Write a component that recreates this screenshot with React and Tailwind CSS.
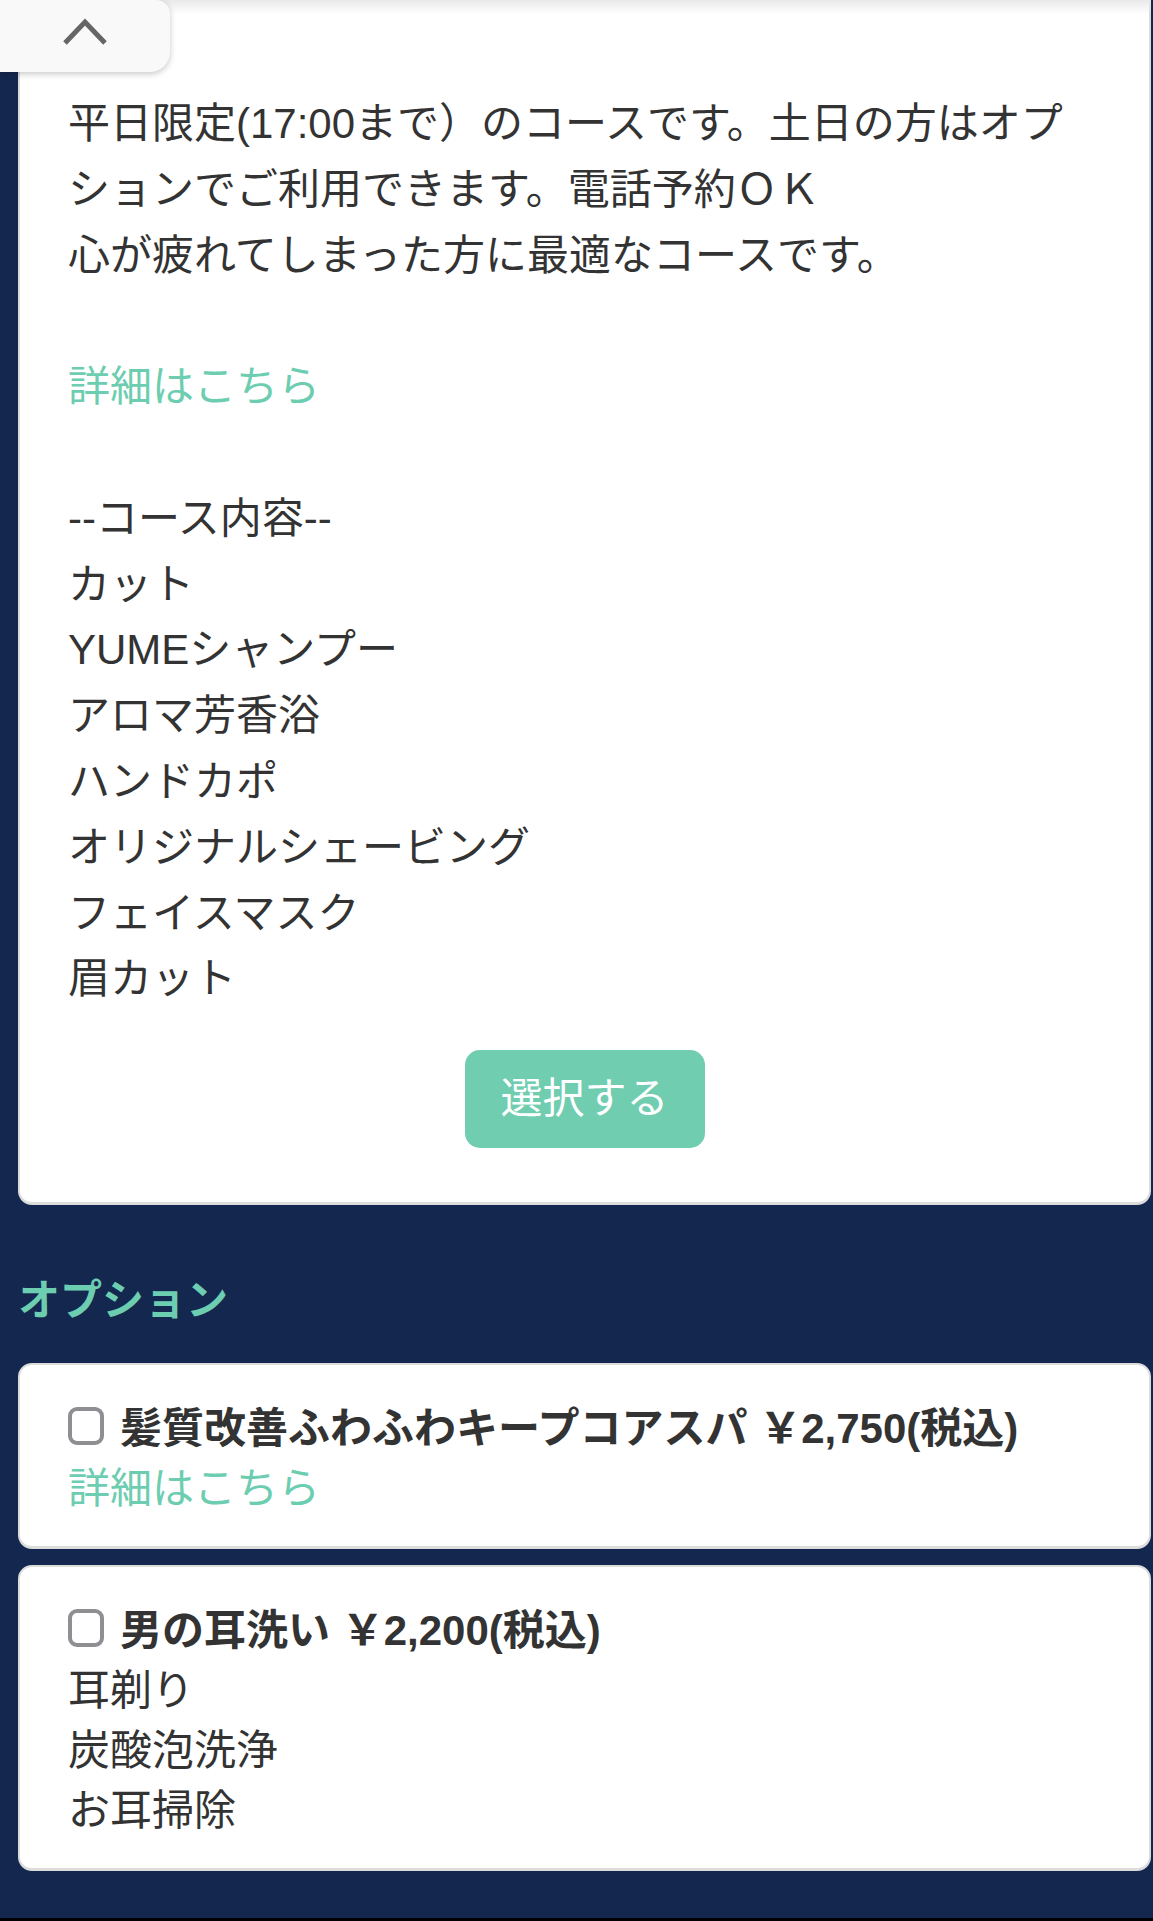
export default function App() {
  const intro = [
    "平日限定(17:00まで）のコースです。土日の方はオプ",
    "ションでご利用できます。電話予約ＯＫ",
    "心が疲れてしまった方に最適なコースです。",
  ];
  const items = [
    "--コース内容--",
    "カット",
    "YUMEシャンプー",
    "アロマ芳香浴",
    "ハンドカポ",
    "オリジナルシェービング",
    "フェイスマスク",
    "眉カット",
  ];
  return (
    <div className="relative w-[1153px] h-[1921px] overflow-hidden bg-[#13274f] flex flex-col font-['Liberation_Sans','Noto_Sans_CJK_JP',sans-serif]">
      <div className="flex flex-col pl-[18px] pr-[2px]">
        {/* main course card */}
        <section className="bg-white border-x-2 border-b-[3px] border-[#dcdcdc] rounded-b-[14px] pt-[91px] pb-[54px] pl-[48px] pr-[30px] text-[42px] leading-[65.8px] text-[#333]">
          {intro.map((t) => (
            <div key={t} className="whitespace-nowrap">{t}</div>
          ))}
          <div className="h-[65.8px]" />
          <div className="text-[#6dcdb0]">詳細はこちら</div>
          <div className="h-[65.8px]" />
          {items.map((t) => (
            <div key={t} className="whitespace-nowrap">{t}</div>
          ))}
          <div className="flex justify-center mt-[38px] -ml-[18px]">
            <button className="w-[240px] h-[98px] rounded-[15px] bg-[#70cdb0] text-white text-[42px] leading-none">
              選択する
            </button>
          </div>
        </section>

        <h2 className="mt-[66px] text-[42px] leading-[60px] font-bold text-[#6dcdb0]">オプション</h2>

        <div className="mt-[32px] flex flex-col gap-[16px]">
          <div className="bg-white border-2 border-b-[3px] border-[#dcdcdc] rounded-[14px] pt-[34px] pb-[27px] pl-[48px] pr-[20px] text-[42px] leading-[60px] text-[#333]">
            <div className="flex items-center whitespace-nowrap">
              <span className="inline-block w-[36px] h-[38px] border-[4px] border-[#8e8e93] rounded-[9px] mr-[16px] shrink-0 -translate-y-[3px]" />
              <span className="font-bold">髪質改善ふわふわキープコアスパ ￥2,750(税込)</span>
            </div>
            <div className="text-[#6dcdb0]">詳細はこちら</div>
          </div>

          <div className="bg-white border-2 border-b-[3px] border-[#dcdcdc] rounded-[14px] pt-[34px] pb-[27px] pl-[48px] pr-[20px] text-[42px] leading-[60px] text-[#333]">
            <div className="flex items-center whitespace-nowrap">
              <span className="inline-block w-[36px] h-[38px] border-[4px] border-[#8e8e93] rounded-[9px] mr-[16px] shrink-0 -translate-y-[3px]" />
              <span className="font-bold">男の耳洗い ￥2,200(税込)</span>
            </div>
            <div>耳剃り</div>
            <div>炭酸泡洗浄</div>
            <div>お耳掃除</div>
          </div>
        </div>
      </div>

      <div className="flex-1" />
      <div className="h-[3px] bg-black" />

      {/* top shadow from header above */}
      <div className="absolute top-0 left-[18px] right-[2px] h-[14px] bg-linear-to-b from-[#e9e9e9] to-transparent" />

      {/* collapse tab */}
      <div className="absolute top-0 left-0 w-[170px] h-[72px] bg-[#f9f9f9] rounded-br-[20px] rounded-tr-[14px] shadow-[0_2px_6px_rgba(0,0,0,0.22)] flex justify-center pt-[16px]">
        <svg width="48" height="30" viewBox="0 0 48 30" fill="none">
          <polyline points="4,27 24,6 44,27" stroke="#666" strokeWidth="5" />
        </svg>
      </div>
    </div>
  );
}
